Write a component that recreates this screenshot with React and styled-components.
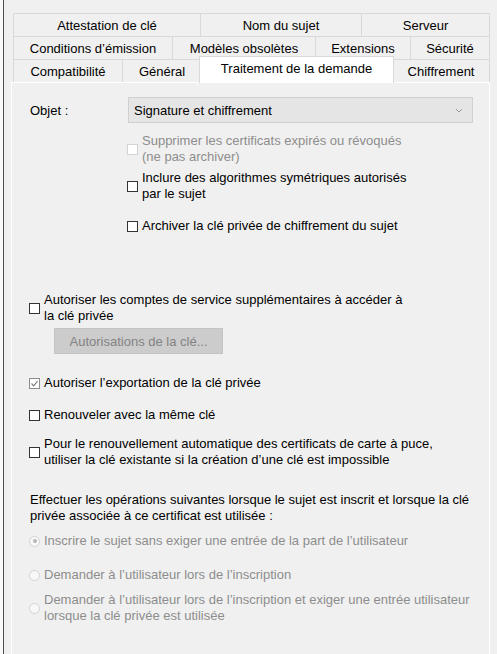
import React from "react";
import styled, { createGlobalStyle } from "styled-components";

const GlobalStyle = createGlobalStyle`
  html, body {
    margin: 0;
    padding: 0;
    height: 100%;
    overflow: hidden;
  }
  body {
    font-family: "Liberation Sans", Arial, sans-serif;
    font-size: 13px;
    color: #000;
    background: #f0f0f0;
  }
  #root {
    height: 100%;
  }
`;

const Screen = styled.div`
  display: flex;
  height: 100%;
`;

// bout de la fenêtre qui est derrière
const BackWindow = styled.div`
  width: 3px;
  background: #fafafa;
  border-right: 1px solid #4d4d4d;
`;

const Dialog = styled.div`
  flex: 1;
  min-width: 0;
  display: flex;
  flex-direction: column;
  padding-top: 13px;
  background: #f0f0f0;
`;

const TabStrip = styled.div`
  margin-left: 9px;
  width: 477px;
  display: flex;
  flex-direction: column;
`;

const TabRow = styled.div`
  display: flex;
  height: 23px;
`;

const Tab = styled.div`
  flex: 0 0 ${(p) => p.$w}px;
  box-sizing: border-box;
  display: flex;
  align-items: center;
  justify-content: center;
  border-top: 1px solid #d9d9d9;
  border-left: 1px solid #d9d9d9;
  background: #f0f0f0;
  white-space: nowrap;
  line-height: 1;

  &:last-child {
    border-right: 1px solid #d9d9d9;
  }
`;

const ActiveTab = styled(Tab)`
  flex-basis: ${(p) => p.$w + 4}px;
  margin: -3px -2px -1px;
  padding-bottom: 3px;
  background: #fff;
  border-right: 1px solid #d9d9d9;
  position: relative;
  z-index: 1;
`;

const Page = styled.div`
  flex: 1;
  margin-left: 7px;
  width: 479px;
  box-sizing: border-box;
  border: 1px solid #fff;
  border-bottom: none;
  padding: 14px 16px 0 18px;
  display: flex;
  flex-direction: column;
`;

const FieldRow = styled.div`
  display: flex;
  align-items: center;
  height: 26px;
`;

const FieldLabel = styled.div`
  width: 98px;
  flex: 0 0 98px;
`;

const Select = styled.div`
  flex: 1;
  height: 26px;
  box-sizing: border-box;
  border: 1px solid #d0d0d0;
  background: #e5e5e5;
  padding: 0 9px 0 5px;
  display: flex;
  align-items: center;
  justify-content: space-between;
`;

const Option = styled.div`
  display: flex;
  align-items: center;
  gap: 4px;
  margin-top: ${(p) => p.$mt}px;
  margin-left: ${(p) => (p.$indent ? 98 : 0)}px;
  line-height: 16px;
  color: ${(p) => (p.$disabled ? "#8d8d8d" : "#000")};
`;

const Box = styled.span`
  flex: 0 0 11px;
  width: 11px;
  height: 11px;
  box-sizing: border-box;
  margin-left: -1px;
  border: 1px solid ${(p) => (p.$disabled ? "#d3d3d3" : p.$checked ? "#8c8c8c" : "#333")};
  background: #fff;
  display: flex;
  align-items: center;
  justify-content: center;
`;

const Radio = styled.span`
  flex: 0 0 11px;
  width: 11px;
  height: 11px;
  box-sizing: border-box;
  margin-left: -1px;
  border-radius: 50%;
  border: 1px solid #d2d2d2;
  background: #f8f8f8;
  display: flex;
  align-items: center;
  justify-content: center;

  &::after {
    content: "";
    width: 4px;
    height: 4px;
    border-radius: 50%;
    background: ${(p) => (p.$on ? "#b8b8b8" : "transparent")};
  }
`;

const Button = styled.div`
  margin-top: ${(p) => p.$mt}px;
  margin-left: 24px;
  width: 169px;
  height: 26px;
  box-sizing: border-box;
  border: 1px solid #c4c4c4;
  background: #cccccc;
  color: #838383;
  display: flex;
  align-items: center;
  justify-content: center;
`;

const Text = styled.div`
  margin-top: ${(p) => p.$mt}px;
  line-height: 16px;
`;

const tabRows = [
  [
    ["Attestation de clé", 187],
    ["Nom du sujet", 161],
    ["Serveur", 129],
  ],
  [
    ["Conditions d’émission", 159],
    ["Modèles obsolètes", 143],
    ["Extensions", 95],
    ["Sécurité", 80],
  ],
  [
    ["Compatibilité", 109],
    ["Général", 79],
    ["Traitement de la demande", 191, true],
    ["Chiffrement", 98],
  ],
];

const CheckOption = ({ mt, indent, disabled, checked, children }) => (
  <Option $mt={mt} $indent={indent} $disabled={disabled}>
    <Box $disabled={disabled} $checked={checked}>
      {checked && (
        <svg width="9" height="9" viewBox="0 0 9 9">
          <path d="M1.5 4.5 L3.7 6.8 L7.5 2.2" fill="none" stroke="#7a7a7a" strokeWidth="1.1" />
        </svg>
      )}
    </Box>
    <span>{children}</span>
  </Option>
);

const RadioOption = ({ mt, on, children }) => (
  <Option $mt={mt} $disabled>
    <Radio $on={on} />
    <span>{children}</span>
  </Option>
);

const App = () => {
  return (
    <Screen>
      <GlobalStyle />
      <BackWindow />
      <Dialog>
        <TabStrip>
          {tabRows.map((row, i) => (
            <TabRow key={i}>
              {row.map(([label, w, active]) =>
                active ? (
                  <ActiveTab key={label} $w={w}>{label}</ActiveTab>
                ) : (
                  <Tab key={label} $w={w}>{label}</Tab>
                )
              )}
            </TabRow>
          ))}
        </TabStrip>

        <Page>
          <FieldRow>
            <FieldLabel>Objet :</FieldLabel>
            <Select>
              <span>Signature et chiffrement</span>
              <svg width="8" height="5" viewBox="0 0 8 5">
                <path d="M1 1 L4 4 L7 1" fill="none" stroke="#9a9a9a" strokeWidth="1" />
              </svg>
            </Select>
          </FieldRow>

          <CheckOption mt={10} indent disabled>
            Supprimer les certificats expirés ou révoqués
            <br />
            (ne pas archiver)
          </CheckOption>
          <CheckOption mt={5} indent>
            Inclure des algorithmes symétriques autorisés
            <br />
            par le sujet
          </CheckOption>
          <CheckOption mt={16} indent>
            Archiver la clé privée de chiffrement du sujet
          </CheckOption>

          <CheckOption mt={58}>
            Autoriser les comptes de service supplémentaires à accéder à
            <br />
            la clé privée
          </CheckOption>
          <Button $mt={4}>Autorisations de la clé...</Button>

          <CheckOption mt={21} checked>
            Autoriser l’exportation de la clé privée
          </CheckOption>
          <CheckOption mt={16}>Renouveler avec la même clé</CheckOption>
          <CheckOption mt={13}>
            Pour le renouvellement automatique des certificats de carte à puce,
            <br />
            utiliser la clé existante si la création d’une clé est impossible
          </CheckOption>

          <Text $mt={24}>
            Effectuer les opérations suivantes lorsque le sujet est inscrit et lorsque la clé
            <br />
            privée associée à ce certificat est utilisée :
          </Text>
          <RadioOption mt={9} on>
            Inscrire le sujet sans exiger une entrée de la part de l’utilisateur
          </RadioOption>
          <RadioOption mt={18}>Demander à l’utilisateur lors de l’inscription</RadioOption>
          <RadioOption mt={9}>
            Demander à l’utilisateur lors de l’inscription et exiger une entrée utilisateur
            <br />
            lorsque la clé privée est utilisée
          </RadioOption>
        </Page>
      </Dialog>
    </Screen>
  );
};

export default App;
